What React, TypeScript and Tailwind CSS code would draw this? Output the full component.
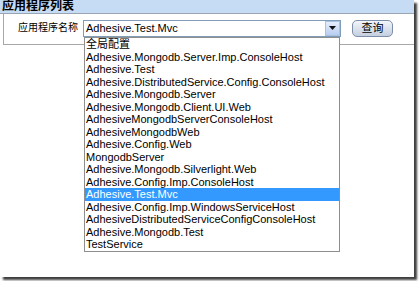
const apps = [
  "全局配置",
  "Adhesive.Mongodb.Server.Imp.ConsoleHost",
  "Adhesive.Test",
  "Adhesive.DistributedService.Config.ConsoleHost",
  "Adhesive.Mongodb.Server",
  "Adhesive.Mongodb.Client.UI.Web",
  "AdhesiveMongodbServerConsoleHost",
  "AdhesiveMongodbWeb",
  "Adhesive.Config.Web",
  "MongodbServer",
  "Adhesive.Mongodb.Silverlight.Web",
  "Adhesive.Config.Imp.ConsoleHost",
  "Adhesive.Test.Mvc",
  "Adhesive.Config.Imp.WindowsServiceHost",
  "AdhesiveDistributedServiceConfigConsoleHost",
  "Adhesive.Mongodb.Test",
  "TestService",
];

const selected = "Adhesive.Test.Mvc";

export default function App() {
  return (
    <div className="relative w-[420px] h-[281px] bg-white overflow-hidden font-['Liberation_Sans','Noto_Sans_CJK_SC',sans-serif] text-black">
      <div className="relative w-[414px] h-[277px] bg-white shadow-[3px_3px_2px_rgba(0,0,0,0.75)]">
        <div className="h-[14px] bg-[#c6dbf4] border-b border-[#9aa5b3] pl-[2px] text-[12px] leading-[13px] font-bold">
          应用程序列表
        </div>
        <div className="ml-[3px] h-[31px] border-l border-b border-[#a8a8a8] flex items-center pl-[14px] pb-[2px]">
          <span className="text-[10px] leading-none w-[65px]">应用程序名称</span>
          <div className="flex w-[258px] h-[17px] border border-[#7f9db9] bg-white">
            <div className="flex-1 pl-[2px] text-[11px] leading-[15px]">{selected}</div>
            <div className="w-[15px] h-[15px] border border-[#a9c1e2] bg-gradient-to-b from-[#e6eefc] to-[#b9cdf0] flex items-center justify-center">
              <svg width="7" height="4" viewBox="0 0 7 4">
                <path d="M0 0h7L3.5 4z" fill="#111" />
              </svg>
            </div>
          </div>
          <button className="ml-[11px] w-[41px] h-[17px] rounded-[5px] border border-[#7d8ea8] bg-gradient-to-b from-[#f3f6fb] to-[#c4cfdf] text-[11px] leading-none flex items-center justify-center">
            查询
          </button>
        </div>
        <ul className="absolute left-[84px] top-[37px] w-[256px] border border-[#8e8e8e] bg-white">
          {apps.map((name) => (
            <li
              key={name}
              className={`h-[12.5px] pl-[1px] text-[11px] leading-[12.5px] whitespace-nowrap overflow-hidden ${
                name === selected ? "bg-[#3399ff] text-white" : ""
              }`}
            >
              {name}
            </li>
          ))}
        </ul>
      </div>
    </div>
  );
}
